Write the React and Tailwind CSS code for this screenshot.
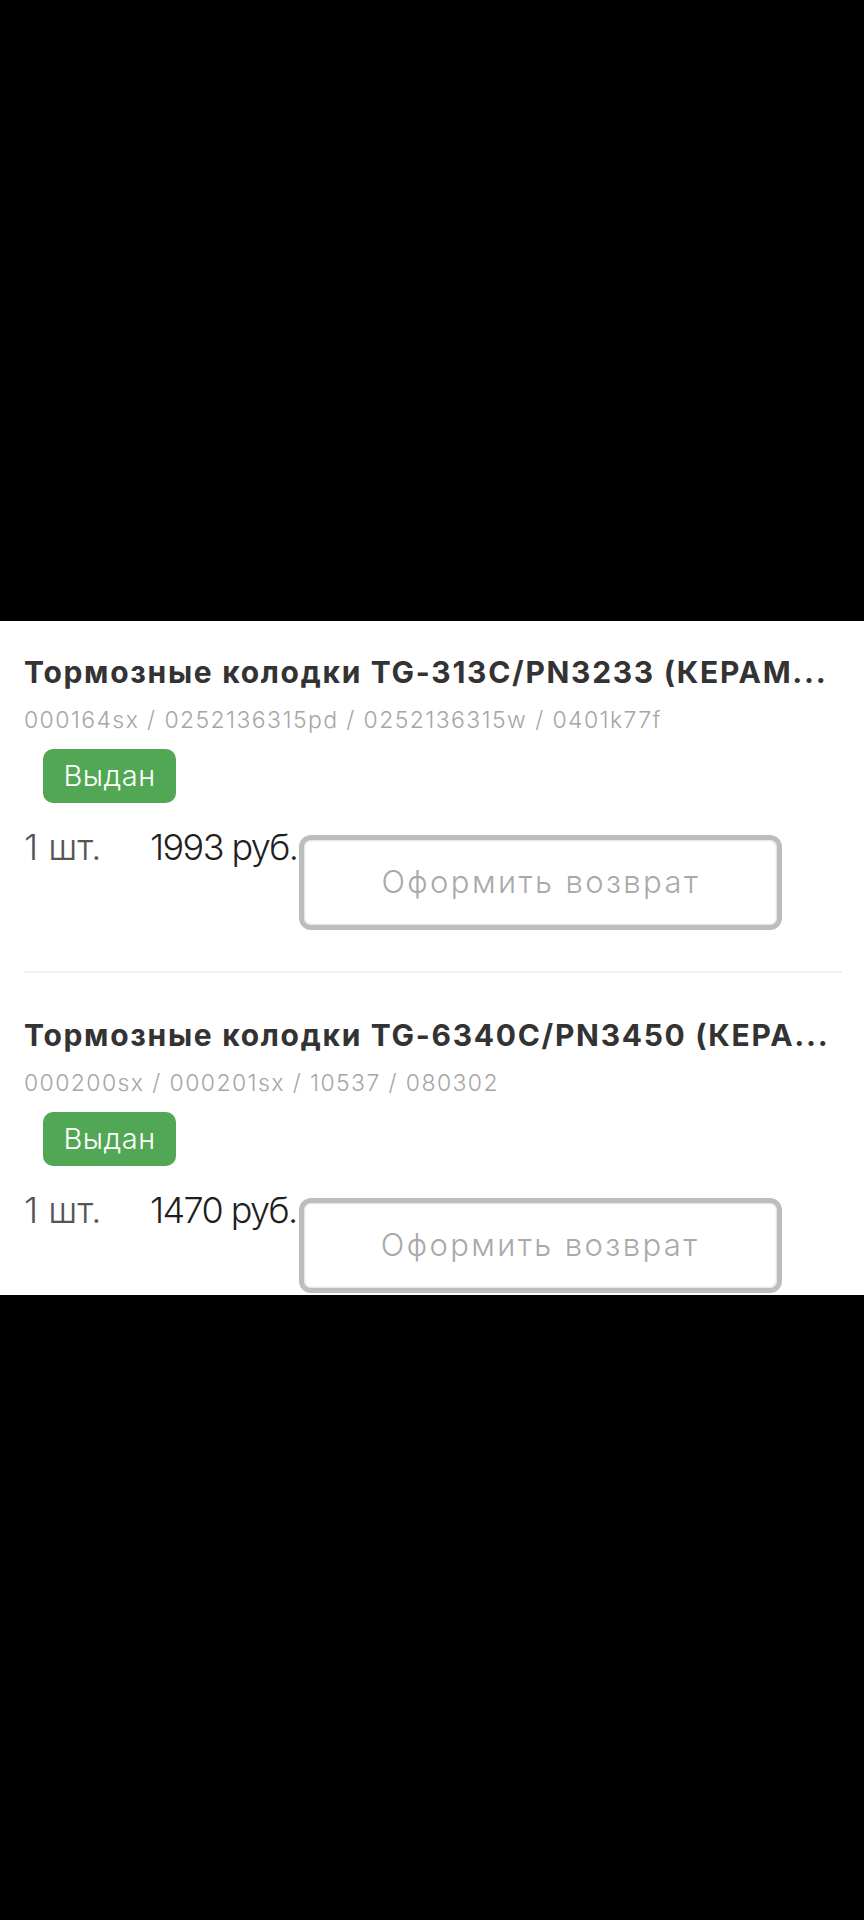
const items = [
  {
    title: "Тормозные колодки TG-313C/PN3233 (КЕРАМ...",
    codes: "000164sx / 0252136315pd / 0252136315w / 0401k77f",
    qty: "1 шт.",
    price: "1993 руб.",
  },
  {
    title: "Тормозные колодки TG-6340C/PN3450 (КЕРА...",
    codes: "000200sx / 000201sx / 10537 / 080302",
    qty: "1 шт.",
    price: "1470 руб.",
  },
];

const OrderItem = ({ item, first }) => (
  <div className={first ? "pt-[33px]" : "pt-[44px]"}>
    <div className="pl-6 pr-[22px]">
      {/* Name */}
      <p className="text-[30px] leading-[36px] font-bold tracking-[1.7px] text-[#333333] whitespace-nowrap overflow-hidden">
        {item.title}
      </p>
      <p className="mt-4 text-[23px] leading-[28px] font-light tracking-[1.4px] text-[#a6a6a6] whitespace-nowrap">
        {item.codes}
      </p>

      {/* Status */}
      <div className="mt-[15px] ml-[19px] w-[133px] h-[54px] rounded-[10px] bg-[#52a755] flex items-center justify-center">
        <span className="text-[29px] font-light tracking-[0.5px] text-white">Выдан</span>
      </div>

      {/* Qty / price / action */}
      <div className="mt-[22px] flex items-start">
        <span className="w-[126px] text-[36px] leading-[44px] font-light text-[#555555]">
          {item.qty}
        </span>
        <span className="text-[36px] leading-[44px] font-light tracking-[-1.6px] text-[#1f1f1f] whitespace-nowrap">
          {item.price}
        </span>
        <button className="mt-[10px] ml-[2px] w-[483px] h-[95px] rounded-[12px] border-[5px] border-[#bdbdbd] bg-white shadow-[inset_0_0_2px_1px_#e2e2e2] flex items-center justify-center">
          <span className="text-[31px] font-light tracking-[2.4px] text-[#a9a9a9]">
            Оформить возврат
          </span>
        </button>
      </div>
    </div>
    {first && <div className="mt-[41px] ml-6 mr-[22px] h-[2px] bg-[#f0f0f0]" />}
  </div>
);

export default function App() {
  return (
    <div className="min-h-[1920px] w-full bg-black font-['Inter','Noto_Sans',sans-serif]">
      <div className="h-[621px]" />
      <div className="h-[674px] bg-white overflow-hidden">
        {items.map((item, i) => (
          <OrderItem key={i} item={item} first={i === 0} />
        ))}
      </div>
    </div>
  );
}
